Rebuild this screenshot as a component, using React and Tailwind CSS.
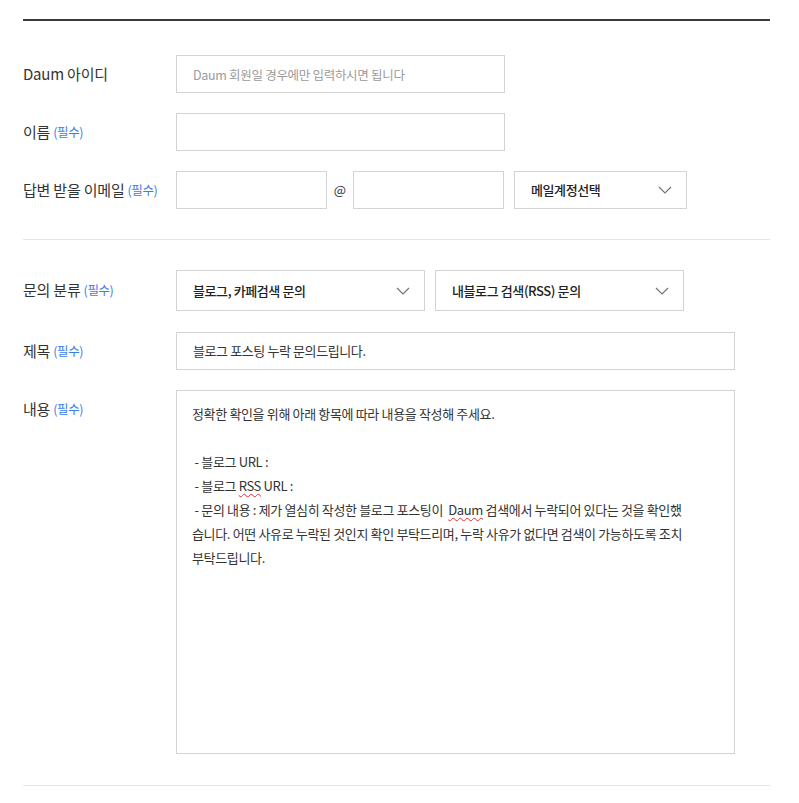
import React from "react";

const font = { fontFamily: '"Noto Sans CJK KR", "Noto Sans", sans-serif' };

const Required = () => (
  <span className="ml-[3px] text-[12.5px] text-[#3d7de8] tracking-[-0.4px]">(필수)</span>
);

const Chevron = () => (
  <svg width="14" height="8" viewBox="0 0 14 8" fill="none" className="shrink-0">
    <polyline points="1,1 7,7 13,1" stroke="#70757d" strokeWidth="1.2" />
  </svg>
);

const Label = ({ children, required }) => (
  <div className="w-[153px] h-[38px] shrink-0 flex items-center text-[15px] text-[#333] tracking-[-0.2px]">
    {children}
    {required && <Required />}
  </div>
);

const Select = ({ value, className }) => (
  <div
    className={`flex items-center justify-between border border-[#d3d3d3] bg-white pl-[16px] pr-[14px] text-[13px] font-medium text-[#222] tracking-[-0.4px] ${className}`}
  >
    <span>{value}</span>
    <Chevron />
  </div>
);

export default function App() {
  return (
    <div className="bg-white min-h-[803px]" style={font}>
      <div className="ml-[23px] w-[747px] pt-[19px]">
        <div className="h-[2px] bg-[#3a3a44]" />

        {/* member info */}
        <div className="flex flex-col gap-[20px] pt-[34px] pb-[30px]">
          <div className="flex items-center">
            <Label>Daum 아이디</Label>
            <input
              className="w-[329px] h-[38px] border border-[#d3d3d3] px-[16px] text-[12.5px] text-[#333] tracking-[-0.3px] placeholder:text-[#9a9a9a] outline-none"
              placeholder="Daum 회원일 경우에만 입력하시면 됩니다"
            />
          </div>
          <div className="flex items-center">
            <Label required>이름</Label>
            <input className="w-[329px] h-[38px] border border-[#d3d3d3] px-[16px] outline-none" />
          </div>
          <div className="flex items-center">
            <Label required>답변 받을 이메일</Label>
            <input className="w-[151px] h-[38px] border border-[#d3d3d3] px-[12px] outline-none" />
            <span className="w-[26px] text-center text-[13px] text-[#333]">@</span>
            <input className="w-[151px] h-[38px] border border-[#d3d3d3] px-[12px] outline-none" />
            <Select value="메일계정선택" className="ml-[10px] w-[173px] h-[38px]" />
          </div>
        </div>

        <div className="h-px bg-[#e6e6e6]" />

        {/* inquiry */}
        <div className="flex flex-col pt-[30px] pb-[31px]">
          <div className="flex items-center">
            <Label required>문의 분류</Label>
            <div className="flex gap-[10px]">
              <Select value="블로그, 카페검색 문의" className="w-[249px] h-[41px]" />
              <Select value="내블로그 검색(RSS) 문의" className="w-[249px] h-[41px]" />
            </div>
          </div>
          <div className="flex items-center mt-[21px]">
            <Label required>제목</Label>
            <div className="w-[559px] h-[38px] border border-[#d3d3d3] px-[16px] flex items-center text-[13px] text-[#333] tracking-[-0.4px]">
              블로그 포스팅 누락 문의드립니다.
            </div>
          </div>
          <div className="flex items-start mt-[20px]">
            <Label required>내용</Label>
            <div className="w-[559px] h-[364px] border border-[#d3d3d3] px-[15px] pt-[11px] text-[13px] leading-[24px] text-[#333] tracking-[-0.35px] whitespace-pre">
              <div>정확한 확인을 위해 아래 항목에 따라 내용을 작성해 주세요.</div>
              <div>&nbsp;</div>
              <div> - 블로그 URL :</div>
              <div>
                {" - 블로그 "}
                <span className="underline decoration-wavy decoration-[#e03030] decoration-1 underline-offset-2">RSS</span>
                {" URL :"}
              </div>
              <div>
                {" - 문의 내용 : 제가 열심히 작성한 블로그 포스팅이  "}
                <span className="underline decoration-wavy decoration-[#e03030] decoration-1 underline-offset-2">Daum</span>
                {" 검색에서 누락되어 있다는 것을 확인했"}
              </div>
              <div>습니다. 어떤 사유로 누락된 것인지 확인 부탁드리며, 누락 사유가 없다면 검색이 가능하도록 조치</div>
              <div>부탁드립니다.</div>
            </div>
          </div>
        </div>

        <div className="h-px bg-[#e6e6e6]" />
      </div>
    </div>
  );
}
